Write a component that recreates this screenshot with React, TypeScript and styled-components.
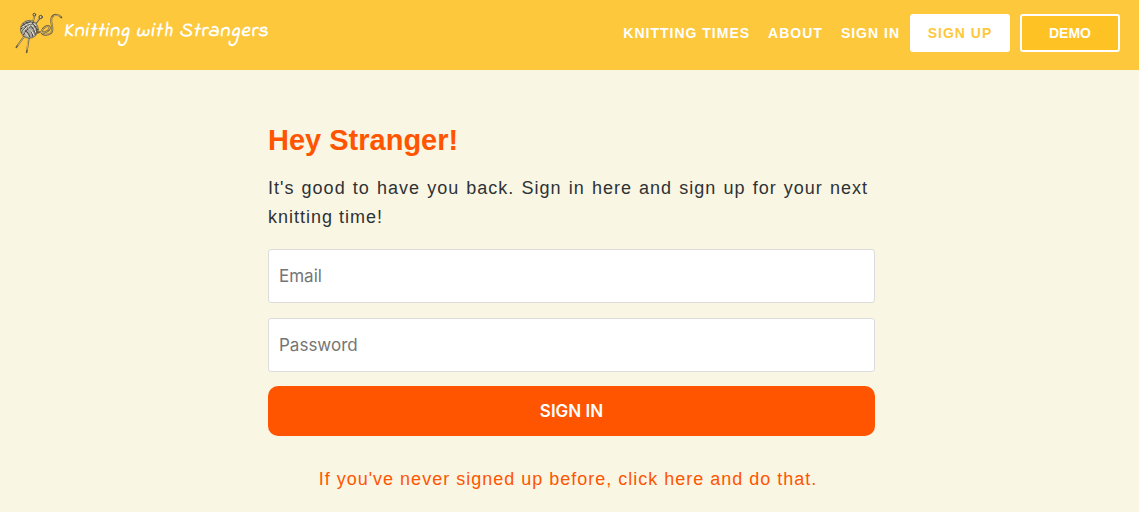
import React from "react";
import styled, { createGlobalStyle } from "styled-components";

const GlobalStyle = createGlobalStyle`
  *, *::before, *::after { box-sizing: border-box; }
  body {
    margin: 0;
    background: #faf6e4;
    color: #2e3235;
    font-family: "Liberation Sans", Helvetica, Arial, sans-serif;
    font-size: 18px;
    line-height: 29px;
    letter-spacing: 1px;
  }
`;

const Header = styled.header`
  display: flex;
  align-items: flex-start;
  justify-content: space-between;
  min-height: 70px;
  padding: 11px 19px 0 15px;
  background: #fec83c;
`;

const Brand = styled.a`
  display: flex;
  align-items: flex-start;
  color: #fff;
  font-family: "Indie Flower", "Comic Neue", Lato, sans-serif;
  font-size: 20px;
  font-style: italic;
  font-weight: 700;
  line-height: 42px;
  text-decoration: none;
  white-space: nowrap;
`;

const Nav = styled.nav`
  display: flex;
  align-items: center;
  gap: 10px;
  padding-top: 3px;
`;

const NavLinks = styled.div`
  display: flex;
  gap: 18px;
`;

const NavLink = styled.a`
  color: #fff;
  font-size: 14px;
  font-weight: 700;
  line-height: 38px;
  text-decoration: none;
  white-space: nowrap;
`;

const SignUpLink = styled(NavLink)`
  width: 100px;
  border-radius: 3px;
  background: #fff;
  color: #fec83c;
  text-align: center;
`;

const DemoButton = styled.button`
  width: 100px;
  height: 38px;
  padding: 0;
  border: 2px solid #fff;
  border-radius: 3px;
  background: #ffc224;
  color: #fff;
  font-family: inherit;
  font-size: 14px;
  font-weight: 700;
`;

const Main = styled.main`
  max-width: 611px;
  margin: 0 auto;
  padding: 52px 0 16px 4px;
`;

const Title = styled.h1`
  margin: 0 0 16px;
  color: #ff5500;
  font-size: 29px;
  line-height: 36px;
  letter-spacing: 0;
`;

const Intro = styled.p`
  max-width: 600px;
  margin: 0 0 17px;
  text-align: justify;
`;

const Form = styled.form`
  display: flex;
  flex-direction: column;
`;

const Field = styled.input`
  height: 54px;
  margin-bottom: 15px;
  padding: 0 10px;
  border: 1px solid #dcdcdc;
  border-radius: 3px;
  background: #fff;
  color: #2e3235;
  font-family: Inter, sans-serif;
  font-size: 17px;

  &:last-of-type { margin-bottom: 14px; }
  &::placeholder { color: #757575; opacity: 1; }
`;

const SubmitButton = styled.button`
  height: 50px;
  border: 0;
  border-radius: 10px;
  background: #ff5500;
  color: #fff;
  font-family: Inter, sans-serif;
  font-size: 17px;
  font-weight: 600;
`;

const Switch = styled.p`
  max-width: 600px;
  margin: 29px 0 0;
  text-align: center;
`;

const SwitchLink = styled.a`
  color: #ff5500;
  text-decoration: none;
`;

function YarnLogo() {
  return (
    <svg width="48" height="43" viewBox="45 33 144 129" fill="none" strokeLinecap="round" aria-hidden="true">
      <g stroke="#6b5b38" strokeWidth="5">
        <path d="M104 46L98 68M120 53L108 70M73 109L49 142M87 112L80 157" />
      </g>
      <g stroke="#f4e6bd" strokeWidth="2">
        <path d="M103 48L98 66M118 54L108 67M71 112L54 135M85 116L81 148" />
      </g>
      <g fill="#d9cba5" stroke="#51452c" strokeWidth="3">
        <circle cx="103" cy="44" r="4" />
        <circle cx="122" cy="51" r="5" />
      </g>
      <circle cx="88" cy="88" r="27" fill="#aaa69b" stroke="#5b564c" strokeWidth="2" />
      <g stroke="#45433f" strokeWidth="3">
        <path d="M65 79Q76 67 91 65M63 87Q78 70 101 67M65 97Q76 78 96 72M70 105Q77 90 90 82" />
        <path d="M95 69Q111 79 111 96M89 76Q105 86 106 104M82 83Q98 92 98 109M75 91Q87 98 90 111" />
        <path d="M70 71L79 82M78 66L87 76M98 84L109 78M101 93L113 88" />
      </g>
      <g stroke="#eee9dc" strokeWidth="3">
        <path d="M68 81Q80 70 95 69M69 94Q80 79 91 75M95 75Q107 85 107 96M86 85Q99 95 101 104M76 98L84 108M103 72L108 77" />
      </g>
      <path
        d="M111 98Q120 94 127 97C138 99 152 89 149 81C143 73 127 84 125 94C124 106 142 107 153 99C165 88 148 65 155 53C162 41 176 43 184 52"
        stroke="#6b5a35"
        strokeWidth="6"
      />
      <path
        d="M120 96L127 97C138 99 151 89 149 81C143 75 127 84 125 94C124 105 142 106 152 99C164 87 149 64 155 54C162 43 174 44 181 49"
        stroke="#efd999"
        strokeWidth="2"
      />
    </svg>
  );
}

export default function App() {
  return (
    <>
      <GlobalStyle />
      <Header>
        <Brand href="#">
          <YarnLogo />
          Knitting with Strangers
        </Brand>
        <Nav aria-label="Main">
          <NavLinks>
            <NavLink href="#times">KNITTING TIMES</NavLink>
            <NavLink href="#about">ABOUT</NavLink>
            <NavLink href="#signin">SIGN IN</NavLink>
          </NavLinks>
          <SignUpLink href="#signup">SIGN UP</SignUpLink>
          <DemoButton type="button">DEMO</DemoButton>
        </Nav>
      </Header>
      <Main>
        <Title>Hey Stranger!</Title>
        <Intro>It's good to have you back. Sign in here and sign up for your next knitting time!</Intro>
        <Form onSubmit={(event) => event.preventDefault()}>
          <Field type="email" placeholder="Email" aria-label="Email" />
          <Field type="password" placeholder="Password" aria-label="Password" />
          <SubmitButton type="submit">SIGN IN</SubmitButton>
        </Form>
        <Switch>
          <SwitchLink href="#signup">If you've never signed up before, click here and do that.</SwitchLink>
        </Switch>
      </Main>
    </>
  );
}
